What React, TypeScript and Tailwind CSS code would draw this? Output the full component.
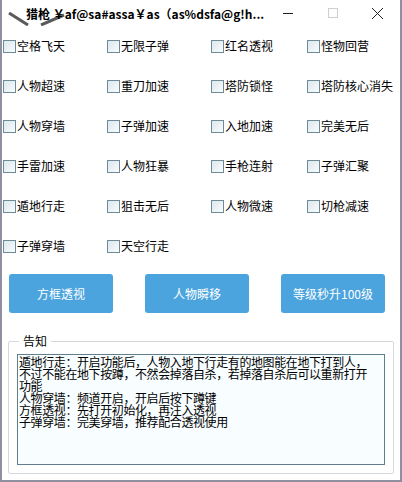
import React from "react";

const items = [
  "空格飞天", "无限子弹", "红名透视", "怪物回营",
  "人物超速", "重刀加速", "塔防锁怪", "塔防核心消失",
  "人物穿墙", "子弹加速", "入地加速", "完美无后",
  "手雷加速", "人物狂暴", "手枪连射", "子弹汇聚",
  "遁地行走", "狙击无后", "人物微速", "切枪减速",
  "子弹穿墙", "天空行走",
];

const notes = [
  "遁地行走：开启功能后，人物入地下行走有的地图能在地下打到人，",
  "不过不能在地下按蹲，不然会掉落自杀，若掉落自杀后可以重新打开",
  "功能",
  "人物穿墙：频道开启，开启后按下蹲键",
  "方框透视：先打开初始化，再注入透视",
  "子弹穿墙：完美穿墙，推荐配合透视使用",
];

export default function App() {
  return (
    <div className="w-[402px] h-[482px] bg-white border-x-2 border-b-2 border-[#8f8f9f] flex flex-col overflow-hidden text-black font-['Noto_Sans_CJK_SC','Noto_Sans',sans-serif]">
      {/* title bar */}
      <div className="relative h-[26px] flex items-center shrink-0">
        <svg className="absolute left-[6px] top-[12px]" width="58" height="14" viewBox="0 0 58 14">
          <line x1="1" y1="1" x2="20" y2="13" stroke="#5a5a5a" strokeWidth="3" />
          <line x1="33" y1="13" x2="56" y2="3" stroke="#5a5a5a" strokeWidth="3" />
        </svg>
        <div className="relative flex-1 min-w-0 pl-[24px] pt-[1px] text-[12px] font-bold whitespace-nowrap overflow-hidden">
          猎枪 ￥af@sa#assa￥as（as%dsfa@g!h...
        </div>
        <div className="w-[45px] h-[26px] flex items-center justify-center">
          <div className="w-[10px] h-[1px] bg-[#222]" />
        </div>
        <div className="w-[45px] h-[26px] flex items-center justify-center">
          <div className="w-[10px] h-[10px] border border-[#cfcfcf]" />
        </div>
        <div className="w-[45px] h-[26px] flex items-center justify-center">
          <svg width="13" height="13" viewBox="0 0 13 13">
            <path d="M1 1 L12 12 M12 1 L1 12" stroke="#222" strokeWidth="1" fill="none" />
          </svg>
        </div>
      </div>

      {/* checkboxes */}
      <div className="grid grid-cols-[104px_104px_96px_1fr] auto-rows-[40px] pl-[1px] shrink-0">
        {items.map((t) => (
          <div key={t} className="flex items-center gap-[1px]">
            <div className="w-[13px] h-[13px] border border-[#6e8a98] bg-gradient-to-br from-[#dde8ee] to-[#f8fbfc]" />
            <span className="text-[12px] leading-[14px] whitespace-nowrap">{t}</span>
          </div>
        ))}
      </div>

      {/* buttons */}
      <div className="flex gap-[32px] pl-[7px] mt-[8px] shrink-0">
        {["方框透视", "人物瞬移", "等级秒升100级"].map((t) => (
          <div
            key={t}
            className="w-[104px] h-[39px] rounded-[3px] bg-[#4ba4de] text-white text-[12px] flex items-center justify-center"
          >
            {t}
          </div>
        ))}
      </div>

      {/* group box */}
      <fieldset className="ml-[6px] mt-[20px] w-[386px] h-[141px] border border-[#d3d9dd] rounded-[2px] shrink-0">
        <legend className="ml-[10px] px-[4px] text-[12px] leading-[16px]">告知</legend>
        <div className="ml-[8px] mt-[5px] w-[368px] h-[111px] border border-[#5f7f8f] bg-[#f8fdff] pl-[1px] pt-[1px] text-[12px] leading-[12px] tracking-[-0.4px] overflow-hidden">
          {notes.map((n, i) => (
            <div key={i} className="whitespace-nowrap">{n}</div>
          ))}
        </div>
      </fieldset>
    </div>
  );
}
